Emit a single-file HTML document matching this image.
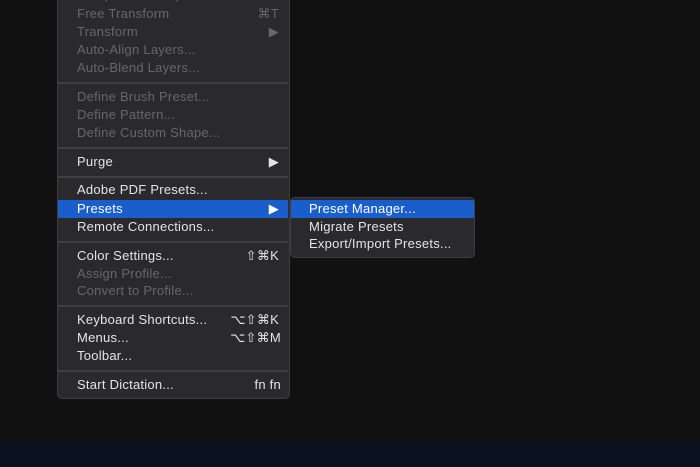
<!DOCTYPE html><html><head><style>
body{margin:0;width:700px;height:467px;overflow:hidden;background:#111112;font-family:"Liberation Sans",sans-serif;font-size:13px;position:relative;letter-spacing:0.25px}
.bot{position:absolute;left:0;top:442px;width:700px;height:25px;background:#0b1120}
.menu{position:absolute;left:57px;top:-8px;width:231px;height:405px;background:#2a2a2c;border:1px solid #3d3d40;border-radius:5px}
.sub{position:absolute;left:290px;top:197px;width:183px;height:59px;background:#2a2a2c;border:1px solid #3d3d40;border-radius:5px}
.r{position:absolute;height:18px;line-height:18px;color:#e4e4e4;white-space:nowrap}
.d{color:#67676a}
.k{position:absolute;right:0;top:0}
.hl{position:absolute;background:#1a5ecc}
.sep{position:absolute;left:58px;width:230px;height:2px;background:#3f3f42}
</style></head><body>
<div class="bot"></div>
<div class="menu"></div>
<div class="hl" style="left:58px;top:200px;width:230px;height:18px"></div>
<div class="sub"></div>
<div class="hl" style="left:291px;top:200px;width:183px;height:18px"></div>
<div class="r d" style="left:77px;top:-14px">Perspective Warp</div>
<div class="r d" style="left:77px;top:5px;width:202px">Free Transform<span class="k">⌘T</span></div>
<div class="r d" style="left:77px;top:23px;width:202px">Transform<span class="k">▶</span></div>
<div class="r d" style="left:77px;top:41px">Auto-Align Layers...</div>
<div class="r d" style="left:77px;top:59px">Auto-Blend Layers...</div>
<div class="sep" style="top:82px"></div>
<div class="r d" style="left:77px;top:88px">Define Brush Preset...</div>
<div class="r d" style="left:77px;top:106px">Define Pattern...</div>
<div class="r d" style="left:77px;top:124px">Define Custom Shape...</div>
<div class="sep" style="top:147px"></div>
<div class="r" style="left:77px;top:153px;width:202px">Purge<span class="k">▶</span></div>
<div class="sep" style="top:176px"></div>
<div class="r" style="left:77px;top:181px">Adobe PDF Presets...</div>
<div class="r" style="left:77px;top:200px;width:202px;color:#fff">Presets<span class="k">▶</span></div>
<div class="r" style="left:77px;top:218px">Remote Connections...</div>
<div class="sep" style="top:241px"></div>
<div class="r" style="left:77px;top:247px;width:202px">Color Settings...<span class="k">⇧⌘K</span></div>
<div class="r d" style="left:77px;top:265px">Assign Profile...</div>
<div class="r d" style="left:77px;top:282px">Convert to Profile...</div>
<div class="sep" style="top:305px"></div>
<div class="r" style="left:77px;top:311px;width:202px">Keyboard Shortcuts...<span class="k">⌥⇧⌘K</span></div>
<div class="r" style="left:77px;top:329px;width:204px">Menus...<span class="k">⌥⇧⌘M</span></div>
<div class="r" style="left:77px;top:347px">Toolbar...</div>
<div class="sep" style="top:370px"></div>
<div class="r" style="left:77px;top:376px;width:204px">Start Dictation...<span class="k">fn fn</span></div>
<div class="r" style="left:309px;top:200px;color:#fff">Preset Manager...</div>
<div class="r" style="left:309px;top:218px">Migrate Presets</div>
<div class="r" style="left:309px;top:235px">Export/Import Presets...</div>
</body></html>
